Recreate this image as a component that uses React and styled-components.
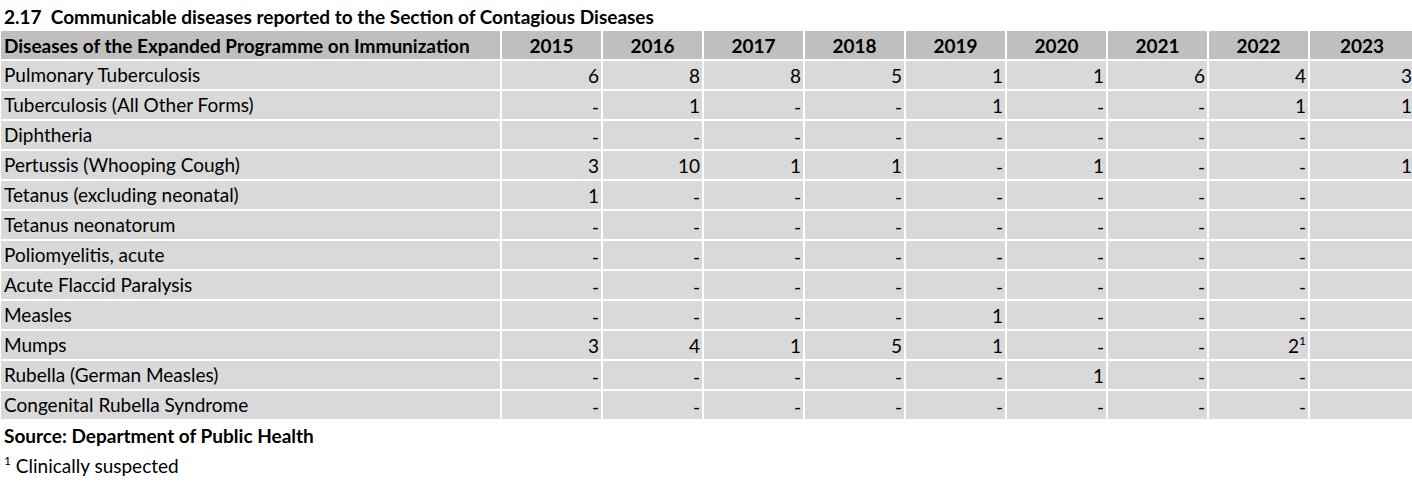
import React from "react";
import styled, { createGlobalStyle } from "styled-components";

const GlobalStyle = createGlobalStyle`
  html, body {
    margin: 0;
    padding: 0;
    background: #ffffff;
    overflow: hidden;
  }
  body {
    font-family: Lato, "Liberation Sans", sans-serif;
    color: #000;
  }
`;

const YEARS = [2015, 2016, 2017, 2018, 2019, 2020, 2021, 2022, 2023];

const ROWS = [
  ["Pulmonary Tuberculosis", ["6", "8", "8", "5", "1", "1", "6", "4", "3"]],
  ["Tuberculosis (All Other Forms)", ["-", "1", "-", "-", "1", "-", "-", "1", "1"]],
  ["Diphtheria", ["-", "-", "-", "-", "-", "-", "-", "-", ""]],
  ["Pertussis (Whooping Cough)", ["3", "10", "1", "1", "-", "1", "-", "-", "1"]],
  ["Tetanus (excluding neonatal)", ["1", "-", "-", "-", "-", "-", "-", "-", ""]],
  ["Tetanus neonatorum", ["-", "-", "-", "-", "-", "-", "-", "-", ""]],
  ["Poliomyelitis, acute", ["-", "-", "-", "-", "-", "-", "-", "-", ""]],
  ["Acute Flaccid Paralysis", ["-", "-", "-", "-", "-", "-", "-", "-", ""]],
  ["Measles", ["-", "-", "-", "-", "1", "-", "-", "-", ""]],
  ["Mumps", ["3", "4", "1", "5", "1", "-", "-", "2*", ""]],
  ["Rubella (German Measles)", ["-", "-", "-", "-", "-", "1", "-", "-", ""]],
  ["Congenital Rubella Syndrome", ["-", "-", "-", "-", "-", "-", "-", "-", ""]]
];

export default function App() {
  return (
    <Page>
      <GlobalStyle />
      <Title>2.17&nbsp;&nbsp;Communicable diseases reported to the Section of Contagious Diseases</Title>
      <Table>
        <colgroup>
          <NameCol />
          {YEARS.map((y, i) => (
            <YearCol key={y} $last={i === YEARS.length - 1} />
          ))}
        </colgroup>
        <thead>
          <tr>
            <HeadCell $left>Diseases of the Expanded Programme on Immunization</HeadCell>
            {YEARS.map(y => (
              <HeadCell key={y}>{y}</HeadCell>
            ))}
          </tr>
        </thead>
        <tbody>
          {ROWS.map(([name, values]) => (
            <tr key={name}>
              <NameCell>{name}</NameCell>
              {values.map((v, i) => (
                <ValueCell key={i} $dash={v === "-"}>
                  {v === "2*" ? (
                    <>
                      2<Sup>1</Sup>
                    </>
                  ) : (
                    v
                  )}
                </ValueCell>
              ))}
            </tr>
          ))}
        </tbody>
      </Table>
      <Source>Source: Department of Public Health</Source>
      <Note>
        <Sup>1</Sup> Clinically suspected
      </Note>
    </Page>
  );
}

const Page = styled.div`
  width: 1412px;
  height: 482px;
  overflow: hidden;
`;

const Title = styled.div`
  padding: 6px 0 0 4px;
  height: 23px;
  line-height: 22px;
  font-size: 19px;
  font-weight: 700;
  white-space: nowrap;
`;

const Table = styled.table`
  width: 1417px;
  margin-left: -1px;
  table-layout: fixed;
  border-collapse: separate;
  border-spacing: 2px;
`;

const NameCol = styled.col`
  width: 499px;
`;

const YearCol = styled.col`
  width: ${({ $last }) => ($last ? "104px" : "99px")};
`;

const HeadCell = styled.th`
  background: #bfbfbf;
  height: 27px;
  padding: 1px 0 0 ${({ $left }) => ($left ? "3px" : "0")};
  text-align: ${({ $left }) => ($left ? "left" : "center")};
  font-size: 19px;
  line-height: 26px;
  font-weight: 700;
  white-space: nowrap;
  vertical-align: middle;
`;

const NameCell = styled.td`
  background: #d9d9d9;
  height: 28px;
  padding: 0 0 0 3px;
  font-size: 19px;
  line-height: 28px;
  white-space: nowrap;
  vertical-align: middle;
`;

const ValueCell = styled.td`
  background: #d9d9d9;
  height: ${({ $dash }) => ($dash ? "24px" : "26px")};
  padding: ${({ $dash }) => ($dash ? "4px 2px 0 0" : "2px 2px 0 0")};
  text-align: right;
  font-size: 19px;
  line-height: 24px;
  vertical-align: middle;
  white-space: nowrap;
`;

const Sup = styled.sup`
  font-size: 12px;
  vertical-align: 8px;
  line-height: 0;
`;

const Source = styled.div`
  padding-left: 4px;
  line-height: 30px;
  font-size: 19px;
  font-weight: 700;
`;

const Note = styled.div`
  padding-left: 4px;
  line-height: 30px;
  font-size: 19px;
`;
